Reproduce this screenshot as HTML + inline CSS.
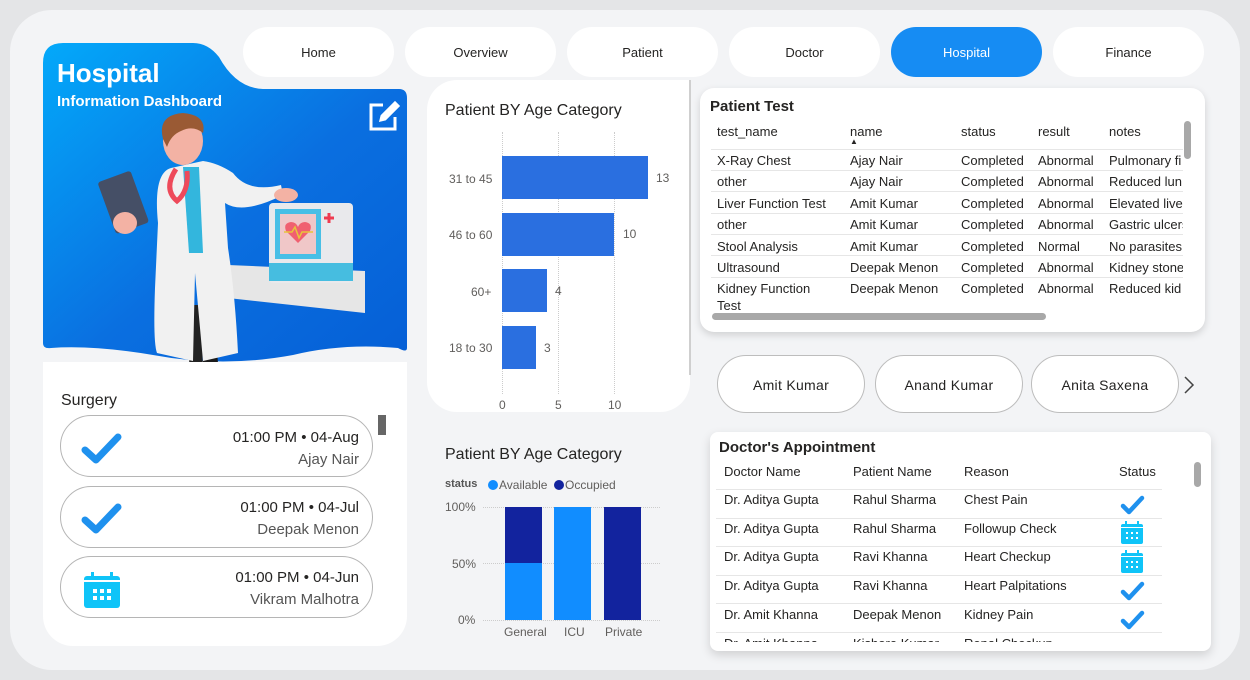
<!DOCTYPE html>
<html><head><meta charset="utf-8"><style>
*{margin:0;padding:0;box-sizing:border-box}
body{width:1250px;height:680px;background:#e4e5e7;font-family:"Liberation Sans",sans-serif;position:relative;overflow:hidden;color:#252423}
.a{position:absolute}
.panel{left:10px;top:10px;width:1230px;height:660px;background:#f3f4f6;border-radius:42px}
.pill{top:27px;width:151px;height:50px;background:#fff;border-radius:25px;font-size:13px;text-align:center;line-height:52px;color:#252423}
.card{background:#fff}
.t{position:absolute;white-space:nowrap}
.pt{font-size:13px;color:#252423}
.ln{position:absolute;height:1px;background:#e6e6e6}
.dp{top:355px;width:148px;height:58px;border:1px solid #bdbdbd;border-radius:29px;background:#fff;font-size:14px;text-align:center;line-height:58px;letter-spacing:.3px}
.sg{left:60px;width:313px;height:62px;border:1px solid #b5b5b5;border-radius:31px;background:#fff}
</style></head><body>
<div class="a panel"></div>
<div class="a pill" style="left:243px">Home</div>
<div class="a pill" style="left:405px">Overview</div>
<div class="a pill" style="left:567px">Patient</div>
<div class="a pill" style="left:729px">Doctor</div>
<div class="a pill" style="left:891px;background:#168cf3;color:#fff">Hospital</div>
<div class="a pill" style="left:1053px">Finance</div>

<!-- blue card -->
<svg class="a" style="left:43px;top:43px" width="364" height="330" viewBox="0 0 364 330">
<defs><linearGradient id="g" x1="0" y1="0" x2="1" y2="1"><stop offset="0" stop-color="#03a9fa"/><stop offset=".55" stop-color="#0a6fe0"/><stop offset="1" stop-color="#055fd6"/></linearGradient></defs>
<path d="M0 20 Q0 0 20 0 L150 0 Q165 0 176 14 Q193 45 220 46 L356 46 Q364 46 364 55 L364 305 Q364 310 355 305 Q300 300 250 312 Q180 325 110 312 Q50 302 8 305 Q0 306 0 300 Z" fill="url(#g)"/>
<g transform="translate(328,62)" fill="none" stroke="#fff" stroke-width="3"><path d="M12 0 H0 V24 H24 V12"/><path d="M10 15 L11 11 L24 -2 L27 1 L14 14 Z" fill="#fff"/></g>
<path d="M185 222 L322 228 L322 270 L185 255 Z" fill="#e6e6e6"/>
<rect x="226" y="160" width="84" height="80" rx="4" fill="#e9e9ec"/>
<rect x="226" y="220" width="84" height="18" fill="#46bde0"/>
<rect x="232" y="166" width="46" height="50" fill="#48bfe6"/>
<rect x="237" y="171" width="36" height="40" fill="#f0c7c8"/>
<path d="M255 200 L243 188 Q240 180 248 179 Q253 179 255 184 Q257 179 262 179 Q270 180 267 188 Z" fill="#f06070"/>
<path d="M241 189 H249 L252 184 L256 195 L259 189 H270" stroke="#e8c43a" stroke-width="1.5" fill="none"/>
<path d="M286 170 V180 M281 175 H291" stroke="#ef3b50" stroke-width="3"/>
<path d="M160 320 L160 262 L170 262 L175 320 Z" fill="#1b1b1b"/>
<path d="M146 325 L148 262 L158 262 L160 325 Z" fill="#222"/>
<path d="M128 125 Q110 130 115 180 L112 245 Q110 300 114 310 L150 318 L152 230 L160 318 L195 310 Q192 250 185 205 L182 160 Q200 172 240 152 L238 142 Q205 150 190 130 Q175 120 160 118 Z" fill="#f1f1f1"/>
<path d="M140 124 L156 124 L160 210 L146 210 Z" fill="#33b6dd"/>
<path d="M133 126 Q120 146 134 158 Q146 148 144 128" stroke="#ee4a5a" stroke-width="5" fill="none"/>
<ellipse cx="140" cy="98" rx="20" ry="24" fill="#f3b2a4"/>
<path d="M120 96 Q114 72 140 70 Q164 72 160 90 Q150 82 138 88 Q128 92 124 104 Z" fill="#9a5a34"/>
<rect x="63" y="132" width="35" height="55" rx="3" transform="rotate(-20 80 160)" fill="#454f66"/>
<ellipse cx="82" cy="180" rx="12" ry="11" fill="#f3b2a4"/>
<ellipse cx="243" cy="152" rx="12" ry="7" fill="#f3b2a4"/>
</svg>
<div class="t" style="left:57px;top:58px;font-size:26px;font-weight:bold;color:#fff">Hospital</div>
<div class="t" style="left:57px;top:93px;font-size:15px;font-weight:bold;color:#fff">Information Dashboard</div>

<!-- surgery -->
<div class="a card" style="left:43px;top:362px;width:364px;height:284px;border-radius:0 0 30px 30px"></div>
<div class="t" style="left:61px;top:392px;font-size:16px;color:#252423">Surgery</div>
<div class="a" style="left:378px;top:415px;width:8px;height:20px;background:#666"></div>
<div class="a sg" style="top:415px"></div>
<div class="a sg" style="top:486px"></div>
<div class="a sg" style="top:556px"></div>
<svg class="a" style="left:80px;top:430px" width="44" height="36"><path d="M5 20 L16 30 L38 7" stroke="#1f91ee" stroke-width="7" fill="none" stroke-linecap="round" stroke-linejoin="round"/></svg>
<svg class="a" style="left:80px;top:500px" width="44" height="36"><path d="M5 20 L16 30 L38 7" stroke="#1f91ee" stroke-width="7" fill="none" stroke-linecap="round" stroke-linejoin="round"/></svg>
<svg class="a" style="left:83px;top:571px" width="38" height="38"><rect x="1" y="5" width="36" height="32" rx="3" fill="#0fc4f8"/><rect x="8" y="1" width="3" height="7" fill="#0fc4f8"/><rect x="27" y="1" width="3" height="7" fill="#0fc4f8"/><rect x="1" y="9" width="36" height="2" fill="#fff"/><g fill="#fff"><rect x="10" y="18" width="4" height="4"/><rect x="17" y="18" width="4" height="4"/><rect x="24" y="18" width="4" height="4"/><rect x="10" y="25" width="4" height="4"/><rect x="17" y="25" width="4" height="4"/><rect x="24" y="25" width="4" height="4"/></g></svg>
<div class="t" style="right:891px;top:429px;font-size:15px;color:#252423">01:00 PM • 04-Aug</div>
<div class="t" style="right:891px;top:451px;font-size:15px;color:#555">Ajay Nair</div>
<div class="t" style="right:891px;top:499px;font-size:15px;color:#252423">01:00 PM • 04-Jul</div>
<div class="t" style="right:891px;top:521px;font-size:15px;color:#555">Deepak Menon</div>
<div class="t" style="right:891px;top:569px;font-size:15px;color:#252423">01:00 PM • 04-Jun</div>
<div class="t" style="right:891px;top:591px;font-size:15px;color:#555">Vikram Malhotra</div>

<!-- age chart card -->
<div class="a card" style="left:427px;top:80px;width:263px;height:332px;border-radius:30px 0 30px 30px"></div>
<div class="a" style="left:689px;top:80px;width:2px;height:295px;background:#cfcfcf"></div>
<div class="t" style="left:445px;top:102px;font-size:16px;color:#252423">Patient BY Age Category</div>
<div class="a" style="left:502px;top:132px;height:262px;border-left:1px dotted #ccc"></div>
<div class="a" style="left:558px;top:132px;height:262px;border-left:1px dotted #ccc"></div>
<div class="a" style="left:614px;top:132px;height:262px;border-left:1px dotted #ccc"></div>
<div class="a" style="left:502px;top:156px;width:146px;height:43px;background:#2a6fe0"></div>
<div class="a" style="left:502px;top:213px;width:112px;height:43px;background:#2a6fe0"></div>
<div class="a" style="left:502px;top:269px;width:45px;height:43px;background:#2a6fe0"></div>
<div class="a" style="left:502px;top:326px;width:34px;height:43px;background:#2a6fe0"></div>
<div class="t" style="left:449px;top:172px;font-size:12px;color:#605e5c">31 to 45</div>
<div class="t" style="left:449px;top:228px;font-size:12px;color:#605e5c">46 to 60</div>
<div class="t" style="left:471px;top:285px;font-size:12px;color:#605e5c">60+</div>
<div class="t" style="left:449px;top:341px;font-size:12px;color:#605e5c">18 to 30</div>
<div class="t" style="left:656px;top:171px;font-size:12px;color:#605e5c">13</div>
<div class="t" style="left:623px;top:227px;font-size:12px;color:#605e5c">10</div>
<div class="t" style="left:555px;top:284px;font-size:12px;color:#605e5c">4</div>
<div class="t" style="left:544px;top:341px;font-size:12px;color:#605e5c">3</div>
<div class="t" style="left:499px;top:398px;font-size:12px;color:#605e5c">0</div>
<div class="t" style="left:555px;top:398px;font-size:12px;color:#605e5c">5</div>
<div class="t" style="left:608px;top:398px;font-size:12px;color:#605e5c">10</div>

<!-- bed chart -->
<div class="t" style="left:445px;top:446px;font-size:16px;color:#252423">Patient BY Age Category</div>
<div class="t" style="left:445px;top:478px;font-size:11px;font-weight:bold;color:#555">status</div>
<div class="a" style="left:488px;top:480px;width:10px;height:10px;border-radius:50%;background:#118dff"></div>
<div class="t" style="left:499px;top:478px;font-size:12px;color:#605e5c">Available</div>
<div class="a" style="left:554px;top:480px;width:10px;height:10px;border-radius:50%;background:#12239e"></div>
<div class="t" style="left:565px;top:478px;font-size:12px;color:#605e5c">Occupied</div>
<div class="a" style="left:483px;top:507px;width:177px;border-top:1px dotted #ccc"></div>
<div class="a" style="left:483px;top:563px;width:177px;border-top:1px dotted #ccc"></div>
<div class="a" style="left:483px;top:620px;width:177px;border-top:1px dotted #ccc"></div>
<div class="t" style="left:445px;top:500px;font-size:12px;color:#605e5c">100%</div>
<div class="t" style="left:452px;top:557px;font-size:12px;color:#605e5c">50%</div>
<div class="t" style="left:458px;top:613px;font-size:12px;color:#605e5c">0%</div>
<div class="a" style="left:505px;top:507px;width:37px;height:57px;background:#12239e"></div>
<div class="a" style="left:505px;top:563px;width:37px;height:57px;background:#118dff"></div>
<div class="a" style="left:554px;top:507px;width:37px;height:113px;background:#118dff"></div>
<div class="a" style="left:604px;top:507px;width:37px;height:113px;background:#12239e"></div>
<div class="t" style="left:504px;top:625px;font-size:12px;color:#605e5c">General</div>
<div class="t" style="left:564px;top:625px;font-size:12px;color:#605e5c">ICU</div>
<div class="t" style="left:605px;top:625px;font-size:12px;color:#605e5c">Private</div>

<!-- patient test -->
<div class="a card" style="left:700px;top:88px;width:505px;height:244px;border-radius:14px;box-shadow:0 3px 8px rgba(0,0,0,.15)"></div>
<div class="t" style="left:710px;top:98px;font-size:15px;font-weight:bold;color:#252423">Patient Test</div>
<div class="a" style="left:1184px;top:121px;width:7px;height:38px;border-radius:4px;background:#a8a8a8"></div>
<div class="a" style="left:712px;top:313px;width:334px;height:7px;border-radius:4px;background:#a8a8a8"></div>
<div class="t pt" style="left:717px;top:124px">test_name</div>
<div class="t pt" style="left:850px;top:124px">name</div>
<div class="t" style="left:850px;top:137px;font-size:8px">▲</div>
<div class="t pt" style="left:961px;top:124px">status</div>
<div class="t pt" style="left:1038px;top:124px">result</div>
<div class="t pt" style="left:1109px;top:124px">notes</div>
<div class="ln" style="left:711px;top:149px;width:472px"></div>
<div class="ln" style="left:711px;top:170px;width:472px"></div>
<div class="ln" style="left:711px;top:191px;width:472px"></div>
<div class="ln" style="left:711px;top:213px;width:472px"></div>
<div class="ln" style="left:711px;top:234px;width:472px"></div>
<div class="ln" style="left:711px;top:255px;width:472px"></div>
<div class="ln" style="left:711px;top:277px;width:472px"></div>
<div style="position:absolute;left:717px;top:150px;width:466px;overflow:hidden;font-size:13px;line-height:21.4px">
<div style="position:relative;height:163px">
<div class="t" style="left:0;top:0">X-Ray Chest<br>other<br>Liver Function Test<br>other<br>Stool Analysis<br>Ultrasound<br>Kidney Function</div>
<div class="t" style="left:0;top:149px;line-height:13px">Test</div>
<div class="t" style="left:133px;top:0">Ajay Nair<br>Ajay Nair<br>Amit Kumar<br>Amit Kumar<br>Amit Kumar<br>Deepak Menon<br>Deepak Menon</div>
<div class="t" style="left:244px;top:0">Completed<br>Completed<br>Completed<br>Completed<br>Completed<br>Completed<br>Completed</div>
<div class="t" style="left:321px;top:0">Abnormal<br>Abnormal<br>Abnormal<br>Abnormal<br>Normal<br>Abnormal<br>Abnormal</div>
<div class="t" style="left:392px;top:0">Pulmonary fi<br>Reduced lun<br>Elevated live<br>Gastric ulcers<br>No parasites<br>Kidney stone<br>Reduced kid</div>
</div></div>

<!-- doctor pills -->
<div class="a dp" style="left:717px">Amit Kumar</div>
<div class="a dp" style="left:875px">Anand Kumar</div>
<div class="a dp" style="left:1031px">Anita Saxena</div>
<svg class="a" style="left:1183px;top:376px" width="12" height="18"><path d="M2 1 L10 9 L2 17" stroke="#444" stroke-width="1.5" fill="none"/></svg>

<!-- appointment -->
<div class="a card" style="left:710px;top:432px;width:501px;height:219px;border-radius:8px;box-shadow:0 4px 10px rgba(0,0,0,.15)"></div>
<div class="t" style="left:719px;top:439px;font-size:15px;font-weight:bold;color:#252423">Doctor's Appointment</div>
<div class="a" style="left:1194px;top:462px;width:7px;height:25px;border-radius:4px;background:#a8a8a8"></div>
<div class="t pt" style="left:724px;top:464px">Doctor Name</div>
<div class="t pt" style="left:853px;top:464px">Patient Name</div>
<div class="t pt" style="left:964px;top:464px">Reason</div>
<div class="t pt" style="left:1119px;top:464px">Status</div>
<div class="ln" style="left:716px;top:489px;width:446px"></div>
<div class="ln" style="left:716px;top:518px;width:446px"></div>
<div class="ln" style="left:716px;top:546px;width:446px"></div>
<div class="ln" style="left:716px;top:575px;width:446px"></div>
<div class="ln" style="left:716px;top:603px;width:446px"></div>
<div class="ln" style="left:716px;top:632px;width:446px"></div>
<div style="position:absolute;left:724px;top:489px;width:480px;height:153px;overflow:hidden;font-size:13px;line-height:28.7px">
<div class="t" style="left:0;top:-3px">Dr. Aditya Gupta<br>Dr. Aditya Gupta<br>Dr. Aditya Gupta<br>Dr. Aditya Gupta<br>Dr. Amit Khanna<br>Dr. Amit Khanna</div>
<div class="t" style="left:129px;top:-3px">Rahul Sharma<br>Rahul Sharma<br>Ravi Khanna<br>Ravi Khanna<br>Deepak Menon<br>Kishore Kumar</div>
<div class="t" style="left:240px;top:-3px">Chest Pain<br>Followup Check<br>Heart Checkup<br>Heart Palpitations<br>Kidney Pain<br>Renal Checkup</div>
</div>
<svg class="a" style="left:1120px;top:492px" width="28" height="150" viewBox="0 0 28 150">
<g stroke="#1f91ee" stroke-width="4.5" fill="none" stroke-linecap="round" stroke-linejoin="round"><path d="M3 14 L9 20 L22 6"/><path d="M3 100 L9 106 L22 92"/><path d="M3 129 L9 135 L22 121"/></g>
<g fill="#0fc4f8"><rect x="1" y="32" width="22" height="20" rx="2"/><rect x="5" y="29" width="2" height="5"/><rect x="17" y="29" width="2" height="5"/>
<rect x="1" y="61" width="22" height="20" rx="2"/><rect x="5" y="58" width="2" height="5"/><rect x="17" y="58" width="2" height="5"/></g>
<g fill="#fff"><rect x="1" y="35" width="22" height="1"/><rect x="6" y="40" width="2" height="2"/><rect x="11" y="40" width="2" height="2"/><rect x="16" y="40" width="2" height="2"/><rect x="6" y="45" width="2" height="2"/><rect x="11" y="45" width="2" height="2"/><rect x="16" y="45" width="2" height="2"/>
<rect x="1" y="64" width="22" height="1"/><rect x="6" y="69" width="2" height="2"/><rect x="11" y="69" width="2" height="2"/><rect x="16" y="69" width="2" height="2"/><rect x="6" y="74" width="2" height="2"/><rect x="11" y="74" width="2" height="2"/><rect x="16" y="74" width="2" height="2"/></g>
</svg>
</body></html>
